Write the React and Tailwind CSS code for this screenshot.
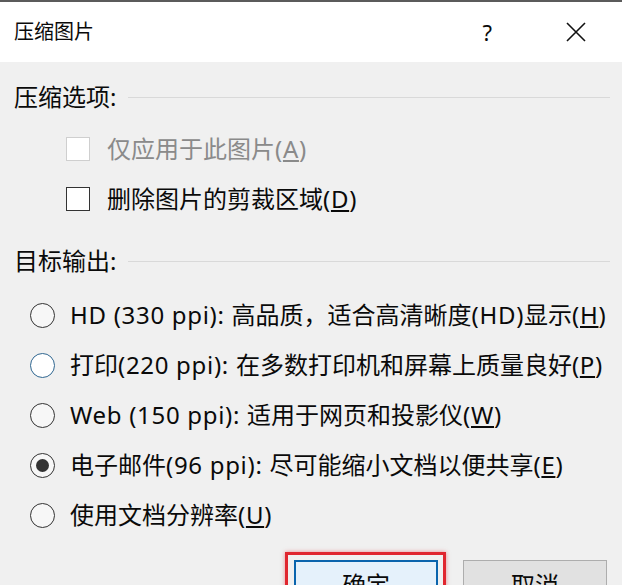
import React from "react";

const font = { fontFamily: '"Noto Sans", "Noto Sans CJK SC", sans-serif' };

// Latin runs are a bit wider in the reference (Segoe UI)
function L({ children }) {
  return <span className="tracking-[0.7px]">{children}</span>;
}

function Key({ k }) {
  return (
    <L>
      (<span className="underline underline-offset-2">{k}</span>)
    </L>
  );
}

function Checkbox({ disabled }) {
  return (
    <span
      className={
        "w-[24px] h-[24px] bg-white border-[1.5px] shrink-0 " +
        (disabled ? "border-[#cfcfcf]" : "border-[#333333]")
      }
    />
  );
}

function Radio({ checked, focus }) {
  return (
    <span
      className={
        "w-[25px] h-[25px] rounded-full border-[1.5px] flex items-center justify-center shrink-0 " +
        (focus ? "border-[#2f6690] bg-white" : "border-[#333333] bg-[#f7f7f7]")
      }
    >
      {checked && <span className="w-[13px] h-[13px] rounded-full bg-[#333333]" />}
    </span>
  );
}

function Header({ children }) {
  return (
    <div className="flex items-center h-[30px] pr-[12px]">
      <span>{children}</span>
      <div className="flex-1 h-px bg-[#d9d9d9] ml-[12px]" />
    </div>
  );
}

function RadioRow({ checked, focus, children }) {
  return (
    <div className="flex items-center h-[50px] pl-[16px] gap-[15px]">
      <Radio checked={checked} focus={focus} />
      <span className="whitespace-nowrap">{children}</span>
    </div>
  );
}

export default function App() {
  return (
    <div className="w-[622px] h-[585px] overflow-hidden bg-[#f0f0f0] text-[#0a0a0a] text-[24px] leading-none" style={font}>
      {/* Title bar */}
      <div className="h-[62px] bg-white border-t-2 border-[#5b5b5b] flex items-center">
        <span className="ml-[14px] text-[20px]">压缩图片</span>
        <span className="ml-auto text-[22px] mr-[74px]">?</span>
        <svg width="20" height="20" viewBox="0 0 20 20" className="mr-[36px]">
          <path d="M1 1L19 19M19 1L1 19" stroke="#111" strokeWidth="1.6" fill="none" />
        </svg>
      </div>

      {/* Body */}
      <div className="pl-[14px] pt-[20px]">
        <Header>压缩选项:</Header>

        <div className="mt-[12px] pl-[52px]">
          <div className="flex items-center h-[50px] gap-[17px] text-[#8a8a8a]">
            <Checkbox disabled />
            <span>
              仅应用于此图片<Key k="A" />
            </span>
          </div>
          <div className="flex items-center h-[50px] gap-[17px]">
            <Checkbox />
            <span>
              删除图片的剪裁区域<Key k="D" />
            </span>
          </div>
        </div>

        <div className="mt-[22px]">
          <Header>目标输出:</Header>
        </div>

        <div className="mt-[14px]">
          <RadioRow>
            <L>HD (330 ppi): </L>高品质，适合高清晰度<L>(HD)</L>显示<Key k="H" />
          </RadioRow>
          <RadioRow focus>
            打印<L>(220 ppi): </L>在多数打印机和屏幕上质量良好<Key k="P" />
          </RadioRow>
          <RadioRow>
            <L>Web (150 ppi): </L>适用于网页和投影仪<Key k="W" />
          </RadioRow>
          <RadioRow checked>
            电子邮件<L>(96 ppi): </L>尽可能缩小文档以便共享<Key k="E" />
          </RadioRow>
          <RadioRow>
            使用文档分辨率<Key k="U" />
          </RadioRow>
        </div>

        {/* Buttons */}
        <div className="flex justify-end gap-[25px] pr-[15px] mt-[20px]">
          <div className="relative">
            <div className="absolute -top-[8px] -left-[9px] -right-[8px] -bottom-[8px] border-[3px] border-[#e0262f] shadow-[0_0_4px_rgba(224,38,47,0.5)]" />
            <button className="w-[144px] h-[50px] bg-[#e5f1fb] border-2 border-[#0a64ad] text-[24px]" style={font}>
              确定
            </button>
          </div>
          <button className="w-[144px] h-[50px] bg-[#e1e1e1] border border-[#adadad] text-[24px]" style={font}>
            取消
          </button>
        </div>
      </div>
    </div>
  );
}
